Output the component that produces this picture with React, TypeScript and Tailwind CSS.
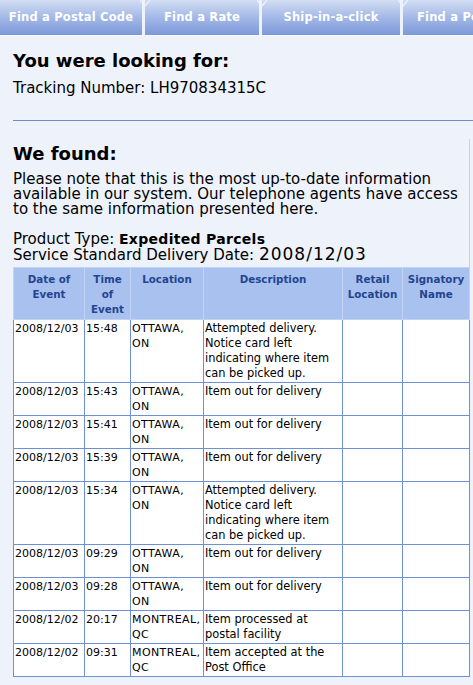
import React from 'react';

const tabs = [
  { label: 'Find a Postal Code', w: 'w-[142px]' },
  { label: 'Find a Rate', w: 'w-[114px]' },
  { label: 'Ship-in-a-click', w: 'w-[138px]' },
  { label: 'Find a Postal Code', w: 'w-[120px]' },
];

const rows = [
  ['2008/12/03', '15:48', 'OTTAWA, ON', 'Attempted delivery. Notice card left indicating where item can be picked up.'],
  ['2008/12/03', '15:43', 'OTTAWA, ON', 'Item out for delivery'],
  ['2008/12/03', '15:41', 'OTTAWA, ON', 'Item out for delivery'],
  ['2008/12/03', '15:39', 'OTTAWA, ON', 'Item out for delivery'],
  ['2008/12/03', '15:34', 'OTTAWA, ON', 'Attempted delivery. Notice card left indicating where item can be picked up.'],
  ['2008/12/03', '09:29', 'OTTAWA, ON', 'Item out for delivery'],
  ['2008/12/03', '09:28', 'OTTAWA, ON', 'Item out for delivery'],
  ['2008/12/02', '20:17', 'MONTREAL, QC', 'Item processed at postal facility'],
  ['2008/12/02', '09:31', 'MONTREAL, QC', 'Item accepted at the Post Office'],
];

const headers = [
  { label: 'Date of Event', w: 'w-[71px]' },
  { label: 'Time of Event', w: 'w-[46px]' },
  { label: 'Location', w: 'w-[73px]' },
  { label: 'Description', w: 'w-[139px]' },
  { label: 'Retail Location', w: 'w-[60px]' },
  { label: 'Signatory Name', w: 'w-[67px]' },
];

// per-column text tweaks so wrapping follows the original
const cellText = ['', '', 'tracking-[0.4px]', 'text-[11.4px]', '', ''];

const Notch = () => (
  <svg className="absolute -left-[5px] top-0" width="10" height="8" viewBox="0 0 10 8">
    <path d="M0 0 L5 6 L10 0" stroke="#eef3fb" strokeWidth="1.2" fill="none" />
  </svg>
);

const App = () => (
  <div className="w-[473px] h-[685px] overflow-hidden bg-[#eef3fb] text-black" style={{ fontFamily: '"DejaVu Sans", Verdana, sans-serif' }}>
    <nav className="flex h-[36px] gap-[3px] border-b border-[#f6f8fd] bg-[#eef3fb] overflow-hidden whitespace-nowrap">
      {tabs.map((t, i) => (
        <div
          key={i}
          className={`relative shrink-0 ${t.w} h-[35px] flex items-center bg-gradient-to-b from-[#d3def4] via-[#a3b8e6] to-[#7c99d9] text-white font-bold text-[11.5px] tracking-[0.2px] ${i === 3 ? 'justify-start pl-[14px]' : 'justify-center'}`}
        >
          {i > 0 && <Notch />}
          {t.label}
        </div>
      ))}
    </nav>

    <div className="pl-[13px]">
      <h1 className="mt-[14px] text-[18px] font-bold leading-[22px]">You were looking for:</h1>
      <p className="text-[15px] leading-[18px] mt-[7px]">Tracking Number: LH970834315C</p>
      <div className="mt-[23px] h-px bg-[#6d8bcb]" />

      <div className="border-r border-[#c9d2e3] mr-[3px] mt-[18px] pt-[4px]">
        <h2 className="text-[18px] font-bold leading-[22px]">We found:</h2>
        <p className="mt-[7px] text-[15px] leading-[15px] pr-[2px]">
          Please note that this is the most up-to-date information available in our system. Our telephone agents have access to the same information presented here.
        </p>
        <p className="mt-[15px] text-[15px] leading-[15px]">
          Product Type: <b className="text-[14px] tracking-[0.3px]">Expedited Parcels</b>
        </p>
        <p className="text-[15px] leading-[15px]">
          Service Standard Delivery Date: <span className="text-[17px] leading-[15px] tracking-[1px]">2008/12/03</span>
        </p>

        <table className="mt-[4px] w-[456px] border-collapse table-fixed text-[11px] leading-[15px]">
          <thead>
            <tr>
              {headers.map((h) => (
                <th
                  key={h.label}
                  className={`${h.w} h-[52px] align-top border border-[#c3d3f3] bg-[#a9c1ef] text-[#23458f] font-bold text-[10.3px] px-[2px] pt-[4px] text-center`}
                >
                  {h.label}
                </th>
              ))}
            </tr>
          </thead>
          <tbody>
            {rows.map((r, i) => (
              <tr key={i}>
                {[...r, '', ''].map((c, j) => (
                  <td key={j} className={`align-top border border-[#6f8fd6] bg-white px-[1px] pt-[1px] pb-[1px] ${cellText[j]}`}>
                    {c}
                  </td>
                ))}
              </tr>
            ))}
          </tbody>
        </table>
      </div>
    </div>
  </div>
);

export default App;
